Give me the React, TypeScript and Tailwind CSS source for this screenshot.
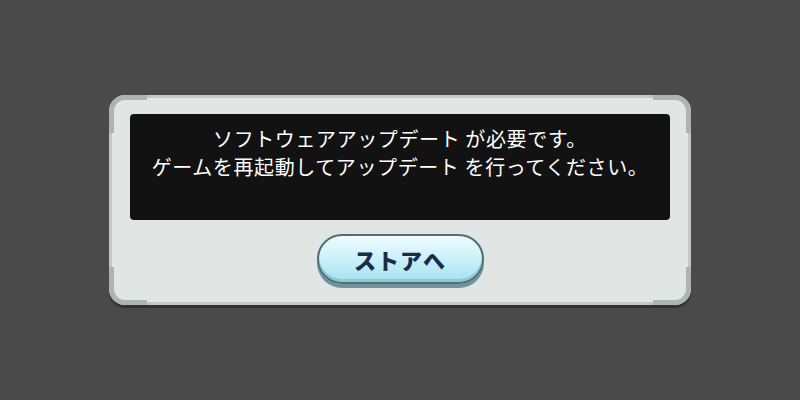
import React from 'react';

const Corner = ({ pos }: { pos: string }) => (
  <div className={`pointer-events-none absolute h-[38px] w-[38px] border-[#adb3b2] ${pos}`} />
);

const App: React.FC = () => {
  return (
    <div
      className="flex h-[400px] w-[800px] items-center justify-center bg-[#4a4a4a]"
      style={{ fontFamily: '"Noto Sans CJK JP", "Noto Sans", sans-serif' }}
    >
      {/* Dialog panel */}
      <div className="relative flex h-[210px] w-[582px] flex-col items-center rounded-[16px] border-[3px] border-[#c3c8c7] bg-[#e1e6e5] px-[17px] pb-[14px] pt-[16px] shadow-[0_3px_0_#2f3333]">
        <Corner pos="-left-[3px] -top-[3px] rounded-tl-[16px] border-l-[5px] border-t-[5px]" />
        <Corner pos="-right-[3px] -top-[3px] rounded-tr-[16px] border-r-[5px] border-t-[5px]" />
        <Corner pos="-bottom-[3px] -left-[3px] rounded-bl-[16px] border-b-[5px] border-l-[5px]" />
        <Corner pos="-bottom-[3px] -right-[3px] rounded-br-[16px] border-b-[5px] border-r-[5px]" />

        {/* Message */}
        <div className="flex h-[106px] w-[540px] flex-col items-center rounded-[4px] bg-[#121212] pt-[11px] text-[20px] leading-[28px] tracking-[0.6px] text-white">
          <p>ソフトウェアアップデート が必要です。</p>
          <p>ゲームを再起動してアップデート を行ってください。</p>
        </div>

        {/* Store button */}
        <button className="mt-[14px] flex h-[50px] w-[167px] items-center justify-center rounded-full border-2 border-[#4d6f78] bg-gradient-to-b from-[#eefcff] via-[#c9f1f9] to-[#a6e2ee] text-[22px] font-black tracking-[1px] text-[#1c2c48] shadow-[0_4px_0_#6f949c,inset_0_-3px_0_#8ccad8]">
          ストアへ
        </button>
      </div>
    </div>
  );
};

export default App;
